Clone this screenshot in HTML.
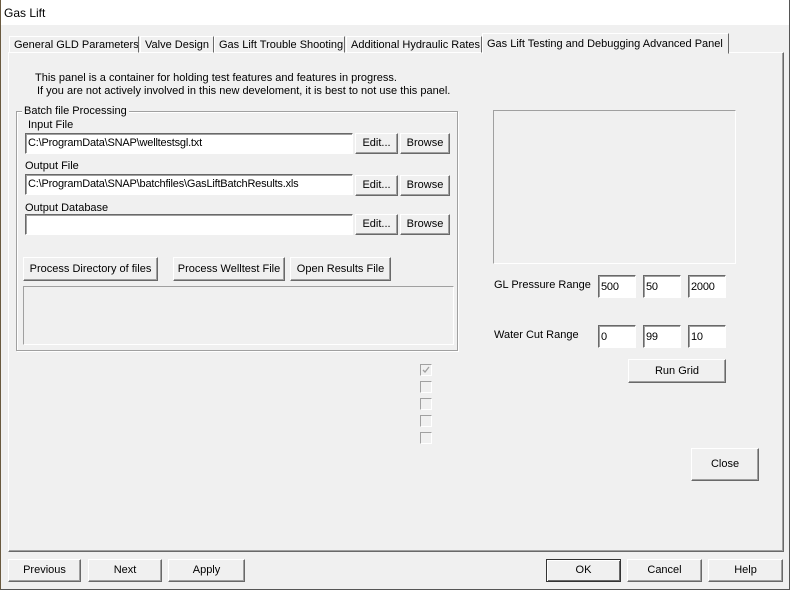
<!DOCTYPE html>
<html><head><meta charset="utf-8"><style>
*{box-sizing:border-box;margin:0;padding:0}
body{width:790px;height:590px;background:#f0f0f0;font-family:"Liberation Sans",sans-serif;font-size:11px;color:#000;position:relative;overflow:hidden}
.a{position:absolute;white-space:nowrap}
.title{left:0;top:0;width:790px;height:26px;background:#fff;border-bottom:1px solid #f0f0f0}
.win{left:0;top:0;width:790px;height:590px;border-left:1px solid #6a5a40;border-right:1px solid #555;border-bottom:1px solid #555}
.btn{position:absolute;white-space:nowrap;overflow:hidden;background:#f0f0f0;border:1px solid;border-color:#fff #696969 #696969 #fff;box-shadow:inset -1px -1px 0 #a0a0a0;text-align:center;font-size:11px}
.tb{position:absolute;white-space:nowrap;overflow:hidden;background:#fff;border:1px solid;border-color:#696969 #fff #fff #696969;box-shadow:inset 1px 1px 0 #a0a0a0;padding:3px 0 0 2px;font-size:11px;letter-spacing:-0.2px}
.tab{position:absolute;white-space:nowrap;overflow:hidden;top:36px;height:17px;border:1px solid;border-color:#fff #696969 transparent #fff;padding:2px 0 0 4px;font-size:11px}
.cb{position:absolute;left:420px;width:12px;height:12px;border:1px solid;border-color:#a0a0a0 #fff #fff #a0a0a0;background:#f0f0f0}
</style></head><body>
<div class="a title"></div>
<div class="a" style="left:4px;top:6px;font-size:12px">Gas Lift</div>
<div class="a win"></div>

<div class="a" style="left:8px;top:52px;width:776px;height:500px;border:1px solid;border-color:#fff #696969 #696969 #fff;box-shadow:inset -1px -1px 0 #a0a0a0"></div>
<div class="tab" style="left:9px;width:130px">General GLD Parameters</div>
<div class="tab" style="left:140px;width:74px">Valve Design</div>
<div class="tab" style="left:214px;width:131px">Gas Lift Trouble Shooting</div>
<div class="tab" style="left:346px;width:136px">Additional Hydraulic Rates</div>
<div class="tab" style="left:482px;top:33px;height:21px;width:247px;background:#f0f0f0;padding-top:4px">Gas Lift Testing and Debugging Advanced Panel</div>

<div class="a" style="left:35px;top:72px">This panel is a container for holding test features and features in progress.</div>
<div class="a" style="left:37px;top:85px">If you are not actively involved in this new develoment, it is best to not use this panel.</div>

<div class="a" style="left:16px;top:111px;width:442px;height:240px;border:1px solid #a0a0a0;box-shadow:1px 1px 0 #fff, inset 1px 1px 0 #fff"></div>
<div class="a" style="left:22px;top:105px;background:#f0f0f0;padding:0 2px">Batch file Processing</div>

<div class="a" style="left:28px;top:119px">Input File</div>
<div class="tb" style="left:25px;top:133px;width:328px;height:21px">C:\ProgramData\SNAP\welltestsgl.txt</div>
<div class="btn" style="left:355px;top:133px;width:43px;height:21px;line-height:19px">Edit...</div>
<div class="btn" style="left:400px;top:133px;width:50px;height:21px;line-height:19px">Browse</div>

<div class="a" style="left:25px;top:160px">Output File</div>
<div class="tb" style="left:25px;top:174px;width:328px;height:21px">C:\ProgramData\SNAP\batchfiles\GasLiftBatchResults.xls</div>
<div class="btn" style="left:355px;top:175px;width:43px;height:21px;line-height:19px">Edit...</div>
<div class="btn" style="left:400px;top:175px;width:50px;height:21px;line-height:19px">Browse</div>

<div class="a" style="left:25px;top:202px">Output Database</div>
<div class="tb" style="left:25px;top:214px;width:328px;height:21px"></div>
<div class="btn" style="left:355px;top:214px;width:43px;height:21px;line-height:19px">Edit...</div>
<div class="btn" style="left:400px;top:214px;width:50px;height:21px;line-height:19px">Browse</div>

<div class="btn" style="left:23px;top:257px;width:135px;height:24px;line-height:22px">Process Directory of files</div>
<div class="btn" style="left:173px;top:257px;width:112px;height:24px;line-height:22px">Process Welltest File</div>
<div class="btn" style="left:290px;top:257px;width:101px;height:24px;line-height:22px">Open Results File</div>

<div class="a" style="left:23px;top:286px;width:431px;height:59px;border:1px solid;border-color:#a0a0a0 #fff #fff #a0a0a0"></div>

<div class="a" style="left:493px;top:110px;width:243px;height:154px;border:1px solid;border-color:#a0a0a0 #fff #fff #a0a0a0"></div>

<div class="a" style="left:494px;top:279px">GL Pressure Range</div>
<div class="tb" style="left:598px;top:275px;width:38px;height:23px;padding-top:5px">500</div>
<div class="tb" style="left:643px;top:275px;width:38px;height:23px;padding-top:5px">50</div>
<div class="tb" style="left:688px;top:275px;width:38px;height:23px;padding-top:5px">2000</div>

<div class="a" style="left:494px;top:329px">Water Cut Range</div>
<div class="tb" style="left:598px;top:325px;width:38px;height:23px;padding-top:5px">0</div>
<div class="tb" style="left:643px;top:325px;width:38px;height:23px;padding-top:5px">99</div>
<div class="tb" style="left:688px;top:325px;width:38px;height:23px;padding-top:5px">10</div>

<div class="btn" style="left:628px;top:359px;width:98px;height:24px;line-height:22px">Run Grid</div>

<div class="cb" style="top:364px"><svg width="10" height="10" style="position:absolute;left:0;top:0"><path d="M2 5 L4 7 L8 2" stroke="#a0a0a0" stroke-width="1.3" fill="none"/></svg></div>
<div class="cb" style="top:381px"></div>
<div class="cb" style="top:398px"></div>
<div class="cb" style="top:415px"></div>
<div class="cb" style="top:432px"></div>

<div class="btn" style="left:691px;top:448px;width:68px;height:33px;line-height:31px">Close</div>

<div class="btn" style="left:8px;top:559px;width:73px;height:23px;line-height:21px">Previous</div>
<div class="btn" style="left:88px;top:559px;width:74px;height:23px;line-height:21px">Next</div>
<div class="btn" style="left:168px;top:559px;width:77px;height:23px;line-height:21px">Apply</div>
<div class="btn" style="left:546px;top:559px;width:75px;height:23px;line-height:21px;border-color:#333;box-shadow:inset 1px 1px 0 #fff,inset -1px -1px 0 #696969">OK</div>
<div class="btn" style="left:627px;top:559px;width:75px;height:23px;line-height:21px">Cancel</div>
<div class="btn" style="left:708px;top:559px;width:75px;height:23px;line-height:21px">Help</div>
</body></html>
